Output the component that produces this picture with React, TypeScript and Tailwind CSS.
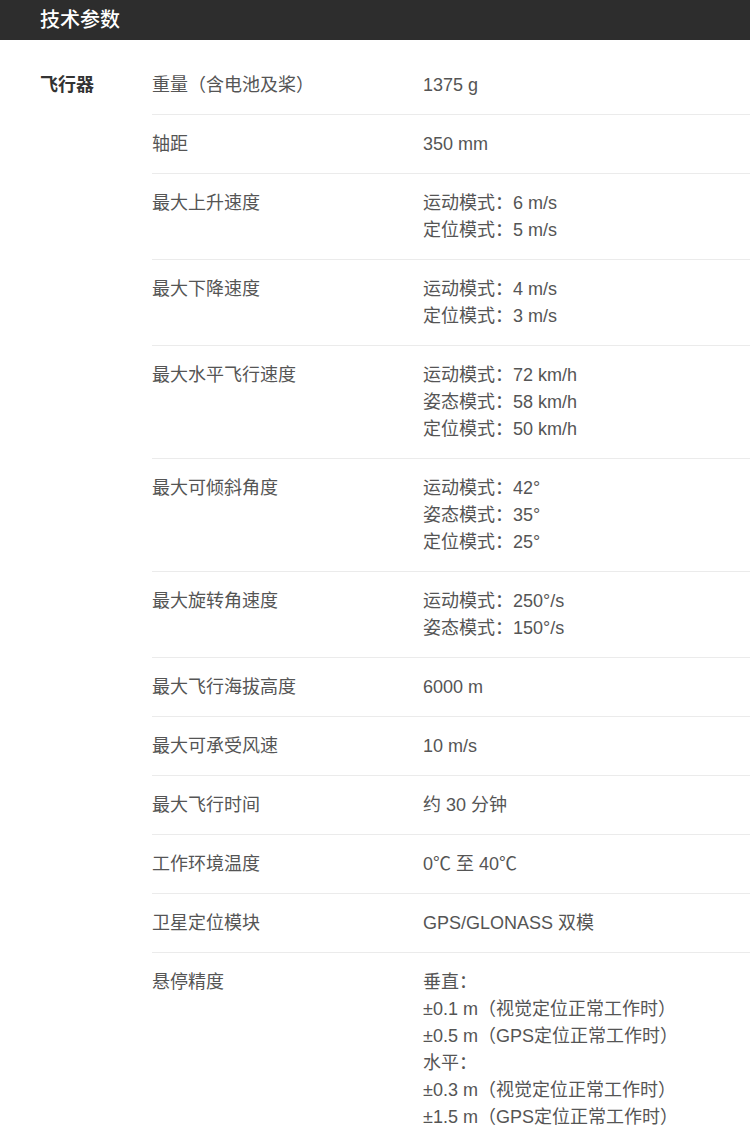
const specs: { label: string; values: string[] }[] = [
  { label: "重量（含电池及桨）", values: ["1375 g"] },
  { label: "轴距", values: ["350 mm"] },
  { label: "最大上升速度", values: ["运动模式：6 m/s", "定位模式：5 m/s"] },
  { label: "最大下降速度", values: ["运动模式：4 m/s", "定位模式：3 m/s"] },
  {
    label: "最大水平飞行速度",
    values: ["运动模式：72 km/h", "姿态模式：58 km/h", "定位模式：50 km/h"],
  },
  {
    label: "最大可倾斜角度",
    values: ["运动模式：42°", "姿态模式：35°", "定位模式：25°"],
  },
  { label: "最大旋转角速度", values: ["运动模式：250°/s", "姿态模式：150°/s"] },
  { label: "最大飞行海拔高度", values: ["6000 m"] },
  { label: "最大可承受风速", values: ["10 m/s"] },
  { label: "最大飞行时间", values: ["约 30 分钟"] },
  { label: "工作环境温度", values: ["0℃ 至 40℃"] },
  { label: "卫星定位模块", values: ["GPS/GLONASS 双模"] },
  {
    label: "悬停精度",
    values: [
      "垂直：",
      "±0.1 m（视觉定位正常工作时）",
      "±0.5 m（GPS定位正常工作时）",
      "水平：",
      "±0.3 m（视觉定位正常工作时）",
      "±1.5 m（GPS定位正常工作时）",
    ],
  },
];

export default function App() {
  return (
    <div
      className="min-h-[1134px] bg-white"
      style={{ fontFamily: '"Liberation Sans", "Noto Sans CJK SC", sans-serif' }}
    >
      <div className="flex h-[40px] items-center bg-[#2d2d2d] px-10">
        <h2 className="text-[20px] font-medium leading-none text-white">技术参数</h2>
      </div>

      <div className="flex pt-[16px]">
        <div className="w-[152px] shrink-0 pl-10 pt-4 text-[18px] font-bold leading-[27px] text-[#333]">
          飞行器
        </div>
        <div className="flex-1">
          {specs.map((row, i) => (
            <div
              key={row.label}
              className={
                i < specs.length - 1
                  ? "flex border-b border-[#ebebeb] pt-4 pb-[15px]"
                  : "flex pt-4 pb-[15px]"
              }
            >
              <div className="w-[271px] shrink-0 text-[18px] leading-[27px] text-[#555]">
                {row.label}
              </div>
              <div className="text-[18px] leading-[27px] text-[#555]">
                {row.values.map((v) => (
                  <p key={v}>{v}</p>
                ))}
              </div>
            </div>
          ))}
        </div>
      </div>
    </div>
  );
}
